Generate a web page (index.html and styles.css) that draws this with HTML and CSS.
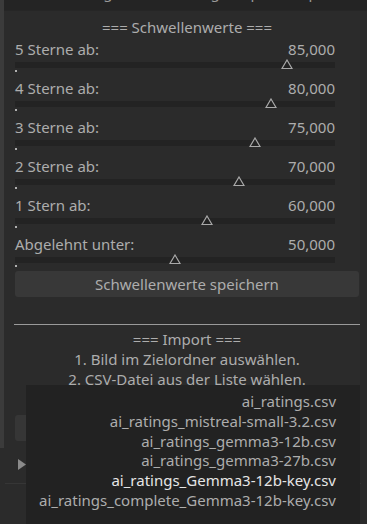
FILE: index.html
```html
<!DOCTYPE html>
<html lang="de">
<head>
<meta charset="utf-8">
<title>Schwellenwerte</title>
<link rel="stylesheet" href="styles.css">
</head>
<body>
<div class="app">
  <div class="strip"></div>
  <div class="column">
    <div class="topbar"><span class="toptext">Einstellungen · Bewertung · Import · Export</span></div>
    <div class="content">
      <div class="heading">=== Schwellenwerte ===</div>
      <div class="sliders">
        <div class="row">
          <div class="labelline"><span>5 Sterne ab:</span><span>85,000</span></div>
          <div class="track"><svg class="handle" style="left:272px" width="12" height="10" viewBox="0 0 12 10"><path d="M6 1 L11 9.5 L1 9.5 Z" fill="none" stroke="#a9a9a9" stroke-width="1.2"/></svg></div>
          <div class="dot"></div>
        </div>
        <div class="row">
          <div class="labelline"><span>4 Sterne ab:</span><span>80,000</span></div>
          <div class="track"><svg class="handle" style="left:256px" width="12" height="10" viewBox="0 0 12 10"><path d="M6 1 L11 9.5 L1 9.5 Z" fill="none" stroke="#a9a9a9" stroke-width="1.2"/></svg></div>
          <div class="dot"></div>
        </div>
        <div class="row">
          <div class="labelline"><span>3 Sterne ab:</span><span>75,000</span></div>
          <div class="track"><svg class="handle" style="left:240px" width="12" height="10" viewBox="0 0 12 10"><path d="M6 1 L11 9.5 L1 9.5 Z" fill="none" stroke="#a9a9a9" stroke-width="1.2"/></svg></div>
          <div class="dot"></div>
        </div>
        <div class="row">
          <div class="labelline"><span>2 Sterne ab:</span><span>70,000</span></div>
          <div class="track"><svg class="handle" style="left:224px" width="12" height="10" viewBox="0 0 12 10"><path d="M6 1 L11 9.5 L1 9.5 Z" fill="none" stroke="#a9a9a9" stroke-width="1.2"/></svg></div>
          <div class="dot"></div>
        </div>
        <div class="row">
          <div class="labelline"><span>1 Stern ab:</span><span>60,000</span></div>
          <div class="track"><svg class="handle" style="left:192px" width="12" height="10" viewBox="0 0 12 10"><path d="M6 1 L11 9.5 L1 9.5 Z" fill="none" stroke="#a9a9a9" stroke-width="1.2"/></svg></div>
          <div class="dot"></div>
        </div>
        <div class="row">
          <div class="labelline"><span>Abgelehnt unter:</span><span>50,000</span></div>
          <div class="track"><svg class="handle" style="left:160px" width="12" height="10" viewBox="0 0 12 10"><path d="M6 1 L11 9.5 L1 9.5 Z" fill="none" stroke="#a9a9a9" stroke-width="1.2"/></svg></div>
          <div class="dot"></div>
        </div>
      </div>
      <div class="btn">Schwellenwerte speichern</div>
      <div class="rule"></div>
      <div class="import">
        <div>=== Import ===</div>
        <div>1. Bild im Zielordner auswählen.</div>
        <div>2. CSV-Datei aus der Liste wählen.</div>
      </div>
      <div class="behind">
        <div class="combo"></div>
        <div class="btn2"></div>
        <div class="section"><svg width="9" height="11" viewBox="0 0 9 11"><path d="M0 0 L8 5.5 L0 11 Z" fill="#8a8a8a"/></svg></div>
        <div class="rule2"></div>
      </div>
    </div>
  </div>
  <div class="popup">
    <div class="item">ai_ratings.csv</div>
    <div class="item">ai_ratings_mistreal-small-3.2.csv</div>
    <div class="item">ai_ratings_gemma3-12b.csv</div>
    <div class="item">ai_ratings_gemma3-27b.csv</div>
    <div class="item hover">ai_ratings_Gemma3-12b-key.csv</div>
    <div class="item">ai_ratings_complete_Gemma3-12b-key.csv</div>
  </div>
</div>
</body>
</html>
```

FILE: styles.css
```css
* { box-sizing: border-box; }
html, body {
  margin: 0;
  padding: 0;
  height: 100%;
  overflow: hidden;
  background: #2b2b2b;
}
body {
  font-family: "Noto Sans", "Open Sans", sans-serif;
  font-size: 15px;
  color: #adadad;
}
.app {
  position: relative;
  display: flex;
  height: 524px;
}
.strip {
  width: 4px;
  height: 448px;
  background: #3b3b3b;
  flex: none;
}
.column {
  flex: 1;
  display: flex;
  flex-direction: column;
}
.topbar {
  flex: none;
  height: 11px;
  background: #242424;
  overflow: hidden;
  text-align: center;
  border-bottom: 1px solid #262626;
}
.toptext {
  display: block;
  line-height: 18px;
  margin-top: -17px;
  color: #9a9a9a;
}
.content {
  flex: none;
  padding: 7px 8px 0 11px;
}
.heading {
  line-height: 18px;
  text-align: center;
  width: 344px;
}
.sliders {
  width: 320px;
  margin-top: 4px;
  display: flex;
  flex-direction: column;
  gap: 7px;
}
.row {
  display: flex;
  flex-direction: column;
}
.labelline {
  display: flex;
  justify-content: space-between;
  line-height: 18px;
}
.track {
  position: relative;
  height: 6px;
  margin-top: 4px;
  background: #232323;
}
.handle {
  position: absolute;
  top: -3px;
  margin-left: -6px;
}
.dot {
  width: 2px;
  height: 2px;
  margin-top: 2px;
  background: #b0b0b0;
}
.btn {
  margin-top: 4px;
  width: 344px;
  height: 26px;
  line-height: 26px;
  text-align: center;
  background: #383838;
  border-radius: 3px;
}
.rule {
  margin-top: 27px;
  margin-left: -1px;
  width: 346px;
  height: 1px;
  background: #9a9a9a;
}
.import {
  margin-top: 4px;
  width: 344px;
  text-align: center;
  line-height: 20px;
}
.behind {
  position: relative;
  height: 110px;
}
.combo {
  height: 26px;
}
.btn2 {
  width: 344px;
  height: 26px;
  background: #363636;
  border-radius: 3px;
}
.section {
  margin-top: 18px;
  padding-left: 3px;
  height: 11px;
}
.section svg { display: block; }
.rule2 {
  margin-top: 13px;
  margin-left: -10px;
  width: 356px;
  height: 1px;
  background: #363636;
}
.popup {
  position: absolute;
  left: 26px;
  top: 385px;
  width: 334px;
  height: 139px;
  background: #222222;
  padding: 7px 24px 0 0;
  text-align: right;
}
.item {
  line-height: 19.8px;
  white-space: nowrap;
}
.item.hover {
  color: #e6e6e6;
}
```
